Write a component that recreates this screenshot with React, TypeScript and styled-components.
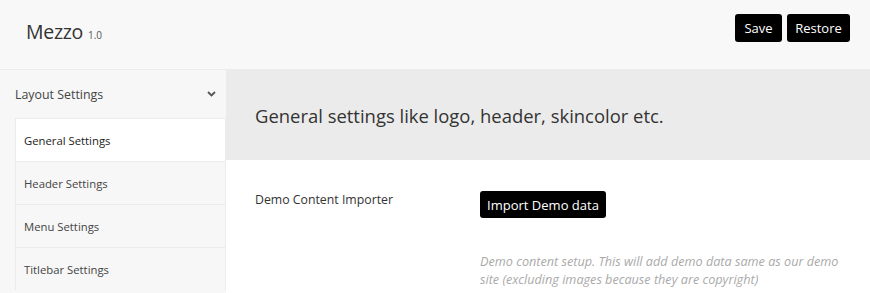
import React from "react";
import styled, { createGlobalStyle } from "styled-components";

const Global = createGlobalStyle`
  html, body { margin: 0; padding: 0; background: #ffffff; }
  body { font-family: "Open Sans", "Noto Sans", sans-serif; color: #333; }
  * { box-sizing: border-box; }
`;

const Page = styled.div`
  width: 870px;
  height: 293px;
  overflow: hidden;
  display: flex;
  flex-direction: column;
`;

const TopBar = styled.header`
  height: 70px;
  flex: none;
  background: #f8f8f8;
  border-bottom: 1px solid #ececec;
  display: flex;
  align-items: flex-start;
  justify-content: space-between;
  padding: 0 20px 0 26px;
`;

const Brand = styled.div`
  display: flex;
  align-items: baseline;
  gap: 5px;
  padding-top: 18px;
`;

const Title = styled.span`
  font-size: 19.5px;
  color: #333;
  letter-spacing: -0.3px;
`;

const Version = styled.span`
  font-size: 10px;
  color: #555;
`;

const Actions = styled.div`
  display: flex;
  gap: 5px;
  padding-top: 14px;
`;

const DarkButton = styled.button<{ $w: number; $h: number }>`
  width: ${(p) => p.$w}px;
  height: ${(p) => p.$h}px;
  background: #000;
  color: #fff;
  border: none;
  border-radius: 3px;
  font-family: inherit;
  font-size: 13px;
  padding: 0;
  display: flex;
  align-items: center;
  justify-content: center;
`;

const Body = styled.div`
  flex: 1;
  display: flex;
`;

const Sidebar = styled.nav`
  width: 226px;
  flex: none;
  background: #f7f7f7;
  display: flex;
  flex-direction: column;
`;

const GroupHead = styled.div`
  height: 48px;
  display: flex;
  align-items: center;
  justify-content: space-between;
  padding: 0 10px 0 15px;
  font-size: 12.4px;
  color: #444;
`;

const SubList = styled.div`
  margin-left: 15px;
  border-left: 1px solid #ececec;
  border-right: 1px solid #ececec;
  display: flex;
  flex-direction: column;
`;

const SubItem = styled.div<{ $active?: boolean }>`
  height: 43px;
  display: flex;
  align-items: center;
  padding-left: 8px;
  font-size: 11.3px;
  color: ${(p) => (p.$active ? "#222" : "#444")};
  background: ${(p) => (p.$active ? "#ffffff" : "#f7f7f7")};
  border-top: 1px solid #ececec;
`;

const Main = styled.main`
  flex: 1;
  display: flex;
  flex-direction: column;
`;

const Banner = styled.div`
  height: 90px;
  background: #ebebeb;
  display: flex;
  align-items: center;
  padding-left: 29px;
  font-size: 18.45px;
  color: #333;
`;

const FieldRow = styled.div`
  display: grid;
  grid-template-columns: 225px 1fr;
  padding: 31px 29px 0 29px;
`;

const FieldLabel = styled.div`
  font-size: 12.3px;
  color: #333;
  line-height: 18px;
`;

const FieldControl = styled.div`
  display: flex;
  flex-direction: column;
  align-items: flex-start;
`;

const Hint = styled.p`
  margin: 34px 0 0 0;
  font-size: 12.65px;
  line-height: 18px;
  font-style: italic;
  color: #aaa;
  width: 365px;
`;

const Chevron = () => (
  <svg width="9" height="6" viewBox="0 0 9 6">
    <path d="M1 1l3.5 3.5L8 1" stroke="#555" strokeWidth="1.8" fill="none" />
  </svg>
);

export default function App() {
  return (
    <Page>
      <Global />
      <TopBar>
        <Brand>
          <Title>Mezzo</Title>
          <Version>1.0</Version>
        </Brand>
        <Actions>
          <DarkButton $w={47} $h={28}>Save</DarkButton>
          <DarkButton $w={63} $h={28}>Restore</DarkButton>
        </Actions>
      </TopBar>
      <Body>
        <Sidebar>
          <GroupHead>
            <span>Layout Settings</span>
            <Chevron />
          </GroupHead>
          <SubList>
            <SubItem $active>General Settings</SubItem>
            <SubItem>Header Settings</SubItem>
            <SubItem>Menu Settings</SubItem>
            <SubItem>Titlebar Settings</SubItem>
          </SubList>
        </Sidebar>
        <Main>
          <Banner>General settings like logo, header, skincolor etc.</Banner>
          <FieldRow>
            <FieldLabel>Demo Content Importer</FieldLabel>
            <FieldControl>
              <DarkButton $w={126} $h={27}>Import Demo data</DarkButton>
              <Hint>
                Demo content setup. This will add demo data same as our demo
                site (excluding images because they are copyright)
              </Hint>
            </FieldControl>
          </FieldRow>
        </Main>
      </Body>
    </Page>
  );
}
